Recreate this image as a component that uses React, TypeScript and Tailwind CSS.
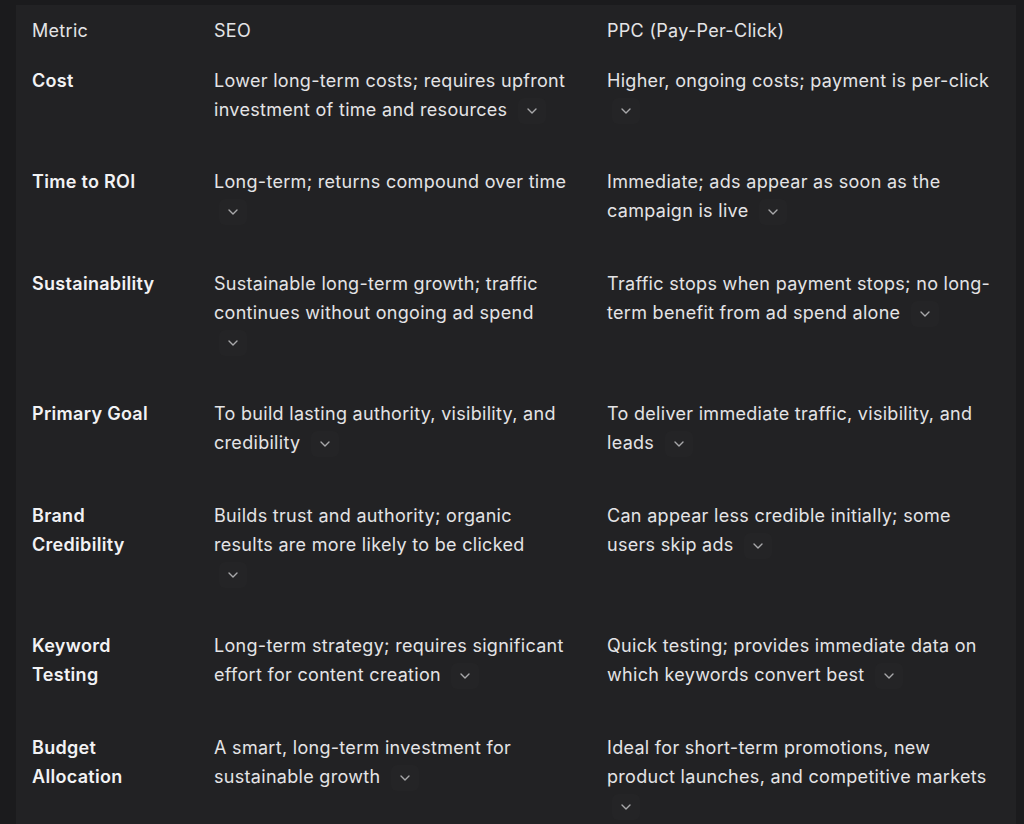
const rows = [
  {
    metric: ['Cost'],
    seo: 'Lower long-term costs; requires upfront investment of time and resources',
    ppc: 'Higher, ongoing costs; payment is per-click',
  },
  {
    metric: ['Time to ROI'],
    seo: 'Long-term; returns compound over time',
    ppc: 'Immediate; ads appear as soon as the campaign is live',
  },
  {
    metric: ['Sustainability'],
    seo: 'Sustainable long-term growth; traffic continues without ongoing ad spend',
    ppc: 'Traffic stops when payment stops; no long-term benefit from ad spend alone',
  },
  {
    metric: ['Primary Goal'],
    seo: 'To build lasting authority, visibility, and credibility',
    ppc: 'To deliver immediate traffic, visibility, and leads',
  },
  {
    metric: ['Brand', 'Credibility'],
    seo: 'Builds trust and authority; organic results are more likely to be clicked',
    ppc: 'Can appear less credible initially; some users skip ads',
  },
  {
    metric: ['Keyword', 'Testing'],
    seo: 'Long-term strategy; requires significant effort for content creation',
    ppc: 'Quick testing; provides immediate data on which keywords convert best',
  },
  {
    metric: ['Budget', 'Allocation'],
    seo: 'A smart, long-term investment for sustainable growth',
    ppc: 'Ideal for short-term promotions, new product launches, and competitive markets',
  },
]

function Chevron() {
  return (
    <span className="ml-[5px] inline-flex w-[40px] items-center align-middle">
      <span className="inline-flex h-[26px] w-[28px] items-center justify-center rounded-md bg-[#242426]">
        <svg width="10" height="6" viewBox="0 0 10 6" fill="none">
          <path d="M1 1l4 4 4-4" stroke="#a8a8aa" strokeWidth="1.4" strokeLinecap="round" strokeLinejoin="round" />
        </svg>
      </span>
    </span>
  )
}

export default function App() {
  return (
    <div className="min-h-screen bg-[#1b1b1d] pl-[16px] pt-[5px] pr-[8px]" style={{ fontFamily: 'Inter, "Noto Sans", sans-serif' }}>
      <div className="w-[1000px] bg-[#222224] pl-[16px] text-[18px] leading-[1.6] tracking-[0.3px] text-[#e4e4e6]">
        <div className="grid grid-cols-[182px_393px_1fr] pt-[12px] pb-[10px]">
          <div>Metric</div>
          <div>SEO</div>
          <div>PPC (Pay-Per-Click)</div>
        </div>
        {rows.map(r => (
          <div key={r.metric.join(' ')} className="grid grid-cols-[182px_393px_1fr] pt-[11px] pb-[33px]">
            <div className="font-semibold text-[#f2f2f4]">
              {r.metric.map(m => <div key={m}>{m}</div>)}
            </div>
            <div className="pr-[37px]">
              {r.seo} <Chevron />
            </div>
            <div className="pr-[23px]">
              {r.ppc} <Chevron />
            </div>
          </div>
        ))}
      </div>
    </div>
  )
}
